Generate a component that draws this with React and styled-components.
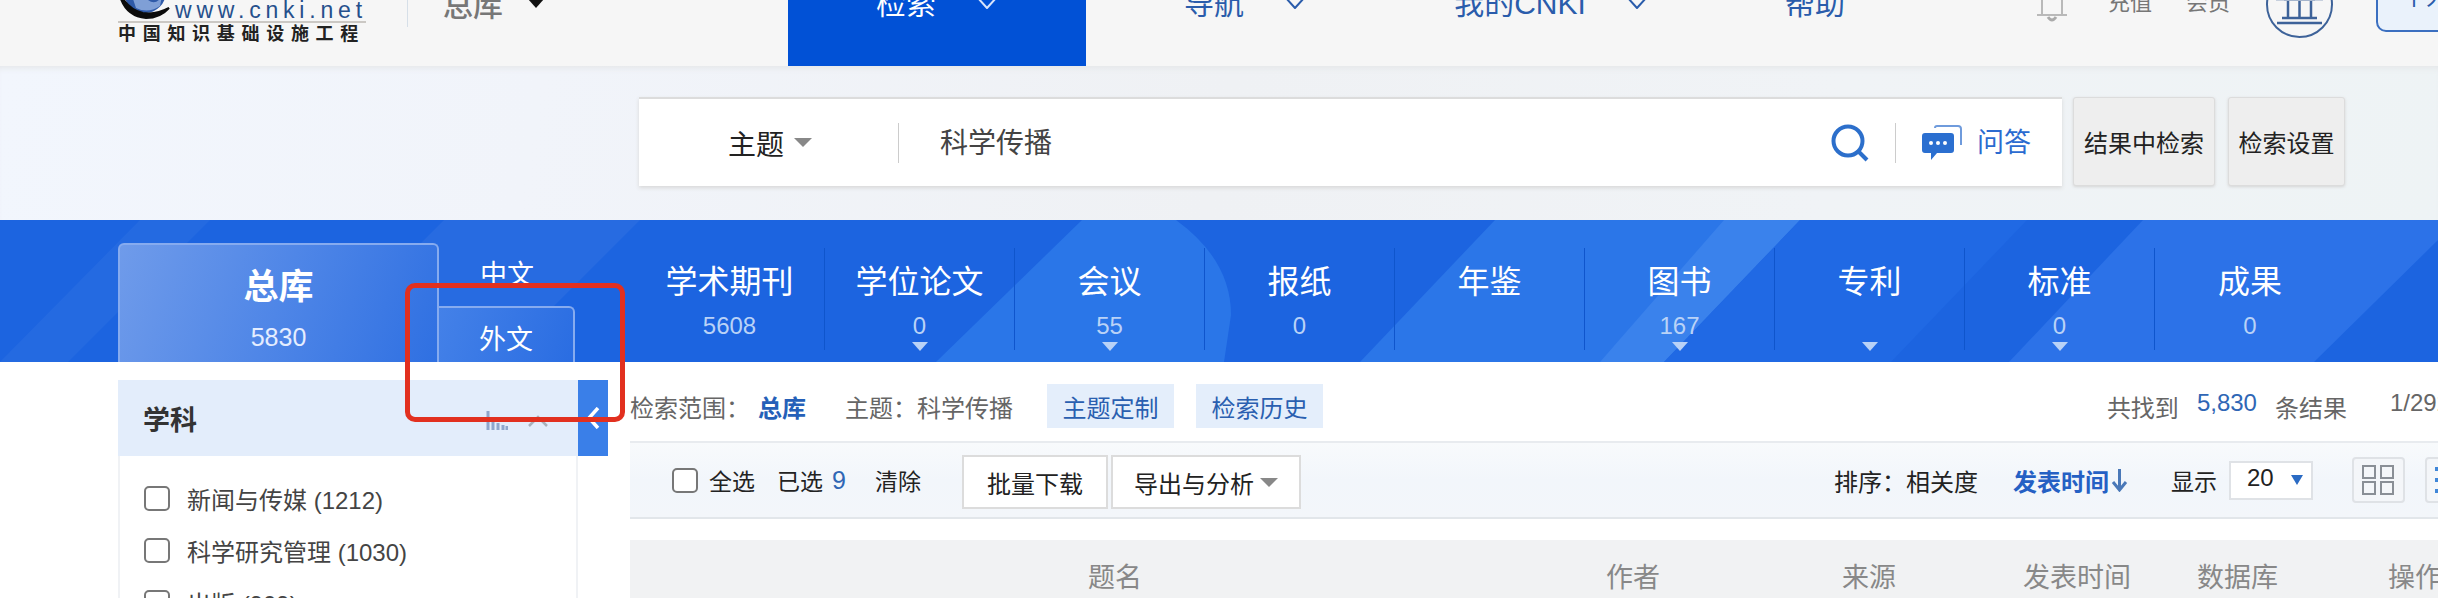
import React from 'react';
import styled, { createGlobalStyle } from 'styled-components';

const FONT = '"Liberation Sans", "Noto Sans CJK SC", sans-serif';

const GlobalStyle = createGlobalStyle`
  html, body {
    margin: 0;
    padding: 0;
    background: #fff;
    overflow: hidden;
  }
  * { box-sizing: border-box; }
`;

const Page = styled.div`
  position: relative;
  width: 2438px;
  height: 598px;
  overflow: hidden;
  font-family: ${FONT};
  color: #333;
`;

// the screenshot starts 34px into the header
const Header = styled.header`
  display: flex;
  align-items: flex-start;
  height: 100px;
  margin-top: -34px;
  padding-left: 118px;
  background: #f6f6f6;
`;

const Logo = styled.div`
  flex: none;
  width: 248px;
  margin-right: 41px;
`;

const LogoTop = styled.div`
  display: flex;
  height: 57px;
  overflow: hidden;
  border-bottom: 2px solid #cbc8c4;
`;

const GlobeMark = styled.svg`
  flex: none;
`;

const LogoWords = styled.div`
  flex: none;
  display: flex;
  flex-direction: column;
  justify-content: flex-end;
  height: 55px;
`;

const LogoMark = styled.div`
  font-size: 44px;
  font-weight: 700;
  line-height: 38px;
  letter-spacing: 2px;
  color: #111;
  margin-top: -2px;
`;

const LogoUrl = styled.div`
  font-size: 23px;
  line-height: 22px;
  letter-spacing: 4.8px;
  color: #26508c;
  white-space: nowrap;
`;

const LogoCaption = styled.div`
  font-size: 18px;
  font-weight: 700;
  line-height: 22px;
  letter-spacing: 6.7px;
  color: #222;
  white-space: nowrap;
`;

const VRule = styled.div`
  flex: none;
  width: 1px;
  height: 61px;
  margin-right: 35px;
  background: #d6dfe8;
`;

const LibrarySwitch = styled.div`
  flex: none;
  display: flex;
  align-items: center;
  width: 345px;
  height: 74px;
  font-size: 30px;
  font-weight: 500;
  color: #777;
`;

const BlackCaret = styled.span`
  width: 0;
  height: 0;
  margin: 0 0 0 25px;
  border-left: 8px solid transparent;
  border-right: 8px solid transparent;
  border-top: 9px solid #111;
`;

const NavItem = styled.div`
  flex: none;
  display: flex;
  justify-content: center;
  gap: 40px;
  width: ${p => p.$width}px;
  height: 100px;
  padding-top: 12px;
  font-size: 30px;
  line-height: 52px;
  color: ${p => (p.$active ? '#fff' : '#2a5cab')};
  background: ${p => (p.$active ? '#0151d6' : 'transparent')};
  svg { margin-top: 18px; }
`;

const HeaderTools = styled.div`
  flex: none;
  display: flex;
  align-items: flex-start;
  margin-left: 103px;
`;

const Bell = styled.svg`
  flex: none;
  margin: 25px 39px 0 0;
`;

const MemberLink = styled.span`
  flex: none;
  margin: 22px ${p => p.$gap}px 0 0;
  font-size: 22px;
  line-height: 30px;
  color: #777;
`;

const InstitutionBadge = styled.div`
  flex: none;
  width: 67px;
  height: 67px;
  margin: 5px 43px 0 0;
  border: 2px solid #3d6299;
  border-radius: 50%;
  display: flex;
  align-items: center;
  justify-content: center;
`;

const LoginButton = styled.div`
  flex: none;
  width: 120px;
  height: 50px;
  margin-top: 16px;
  padding: 0 0 0 24px;
  border: 2px solid #3b6fc0;
  border-radius: 10px;
  background: #eaf2fb;
  font-size: 24px;
  line-height: 26px;
  color: #2a5cab;
`;

const SearchBand = styled.section`
  display: flex;
  height: 154px;
  padding: 31px 0 0 639px;
  background: linear-gradient(100deg, #f2f6fd 0%, #f1f4fa 22%, #eff1f4 50%, #f0f3f6 75%, #eef3f5 100%);
  box-shadow: inset 0 6px 6px -4px #e4e6e8;
`;

const SearchBox = styled.div`
  display: flex;
  align-items: center;
  width: 1423px;
  height: 89px;
  background: #fff;
  border-top: 2px solid #dcdcdc;
  box-shadow: 0 2px 4px #d8d8d8;
`;

const FieldSelect = styled.div`
  flex: none;
  display: flex;
  align-items: center;
  width: 260px;
  height: 40px;
  padding-left: 89px;
  border-right: 1px solid #ccc;
  font-size: 28px;
  color: #222;
`;

const GreyCaret = styled.span`
  width: 0;
  height: 0;
  margin-left: ${p => p.$gap || 10}px;
  border-left: 9px solid transparent;
  border-right: 9px solid transparent;
  border-top: 9px solid #888;
`;

const SearchText = styled.div`
  flex: 1;
  padding-left: 41px;
  margin-top: -4px;
  font-size: 28px;
  color: #444;
`;

const SearchRule = styled.div`
  flex: none;
  width: 1px;
  height: 40px;
  margin: 0 26px;
  background: #ccc;
`;

const AskText = styled.span`
  flex: none;
  margin: -4px 31px 0 15px;
  font-size: 27px;
  color: #2b6bd0;
`;

const GreyButton = styled.div`
  flex: none;
  display: flex;
  align-items: center;
  justify-content: center;
  width: ${p => p.$width}px;
  height: 89px;
  margin-left: ${p => p.$gap}px;
  background: #eeeeee;
  border: 1px solid #dcdcdc;
  border-radius: 3px;
  box-shadow: 0 1px 3px #d4d4d4;
  font-size: 24px;
  color: #222;
`;

const DbBand = styled.section`
  position: relative;
  display: flex;
  height: 142px;
  padding-left: 118px;
  background: #1c64e0;
`;

const BandArt = styled.svg`
  position: absolute;
  left: 0;
  top: 0;
`;

const MainTab = styled.div`
  position: relative;
  flex: none;
  width: 321px;
  height: 119px;
  margin-top: 23px;
  display: flex;
  flex-direction: column;
  align-items: center;
  border: 2px solid #86abef;
  border-bottom: 0;
  border-radius: 6px 6px 0 0;
  background: linear-gradient(110deg, #6f9bea 0%, #4f86e7 50%, #2f70e2 100%);
  color: #fff;
`;

const MainTabTitle = styled.div`
  font-size: 35px;
  font-weight: 700;
  line-height: 50px;
  margin-top: 17px;
`;

const MainTabCount = styled.div`
  font-size: 25px;
  line-height: 34px;
  margin-top: 8px;
  color: #e4edff;
`;

const SubTabs = styled.div`
  position: relative;
  flex: none;
  width: 136px;
  height: 119px;
  margin: 23px 60px 0 0;
  display: flex;
  flex-direction: column;
`;

const SubTab = styled.div`
  display: flex;
  justify-content: center;
  font-size: 27px;
  color: #fff;
  height: ${p => (p.$active ? 56 : 63)}px;
  line-height: ${p => (p.$active ? 64 : 65)}px;
  ${p => p.$active && `
    border: 2px solid #86abef;
    border-left: 0;
    border-bottom: 0;
    border-radius: 0 6px 0 0;
    background: linear-gradient(110deg, #4481e8, #2a6de2);
  `}
`;

const DbItem = styled.div`
  position: relative;
  flex: none;
  width: 190px;
  height: 102px;
  margin-top: 28px;
  display: flex;
  flex-direction: column;
  align-items: center;
  border-right: ${p => (p.$last ? '0' : '1px solid #0f55cc')};
`;

const DbTitle = styled.div`
  margin-top: 12px;
  font-size: 32px;
  line-height: 44px;
  color: #fff;
`;

const DbCount = styled.div`
  min-height: 34px;
  margin-top: 5px;
  font-size: 24px;
  line-height: 34px;
  color: #b9d2f7;
`;

const DbCaret = styled.span`
  width: 0;
  height: 0;
  margin-top: -1px;
  border-left: 8px solid transparent;
  border-right: 8px solid transparent;
  border-top: 9px solid #b9d2f7;
`;

const Content = styled.section`
  display: flex;
  align-items: flex-start;
  padding-left: 118px;
  width: 2480px;
`;

const Sidebar = styled.aside`
  flex: none;
  width: 460px;
  margin-top: 18px;
`;

const SideHead = styled.div`
  display: flex;
  align-items: center;
  height: 76px;
  padding: 0 30px 0 25px;
  background: #e3edfb;
  font-size: 27px;
  font-weight: 700;
  color: #333;
`;

const SideTitle = styled.span`
  flex: 1;
`;

const SideIcon = styled.svg`
  flex: none;
  margin-top: 6px;
`;

const SideBody = styled.div`
  height: 200px;
  padding-top: 16px;
  border: 2px solid #f0f2f5;
  border-top: 0;
`;

const SideItem = styled.div`
  display: flex;
  align-items: center;
  height: 52px;
  padding-left: 24px;
  font-size: 24px;
  color: #444;
`;

const CheckBox = styled.span`
  flex: none;
  display: block;
  width: 26px;
  height: 25px;
  margin-right: ${p => p.$gap}px;
  border: 2px solid #777;
  border-radius: 5px;
  background: #fff;
`;

const CollapseTab = styled.div`
  flex: none;
  display: flex;
  align-items: center;
  justify-content: center;
  width: 30px;
  height: 76px;
  margin-top: 18px;
  background: #3a7fe8;
`;

const Results = styled.div`
  flex: none;
  width: 1850px;
  margin: 22px 0 0 22px;
`;

const ScopeRow = styled.div`
  display: flex;
  align-items: center;
  height: 44px;
  padding-right: 30px;
  font-size: 24px;
  color: #666;
  white-space: nowrap;
`;

const ScopeLink = styled.b`
  margin: 0 39px 0 ${p => p.$gap}px;
  color: #2560b8;
  font-weight: 700;
`;

const TagButton = styled.span`
  display: flex;
  align-items: center;
  justify-content: center;
  width: 127px;
  height: 44px;
  margin-left: ${p => p.$gap}px;
  background: #e4eefb;
  color: #2a5fb0;
`;

const ResultStats = styled.div`
  display: flex;
  gap: 18px;
  margin-left: auto;
  font-size: 24px;
`;

const BlueNumber = styled.span`
  color: #2f66b5;
`;

const PageInfo = styled.span`
  margin-left: 25px;
`;

const Toolbar = styled.div`
  display: flex;
  align-items: center;
  height: 78px;
  margin-top: 13px;
  padding: 0 4px 0 42px;
  border-top: 2px solid #e8ebef;
  border-bottom: 2px solid #e2e6ea;
  background: linear-gradient(180deg, #f8fafc 0%, #f2f6fb 50%, #f3f6fa 100%);
  font-size: 23px;
  color: #222;
  white-space: nowrap;
`;

const ToolText = styled.span`
  flex: none;
  margin-left: ${p => p.$gap}px;
  color: ${p => p.$color || '#222'};
  font-size: ${p => p.$size || 23}px;
  font-weight: ${p => (p.$bold ? 700 : 400)};
`;

const ToolButton = styled.div`
  flex: none;
  display: flex;
  align-items: center;
  justify-content: center;
  width: ${p => p.$width}px;
  height: 54px;
  margin: 4px 0 0 ${p => p.$gap}px;
  background: #fff;
  border: 2px solid #dcdcdc;
  font-size: 24px;
`;

const PageSize = styled.div`
  flex: none;
  display: flex;
  align-items: center;
  justify-content: space-between;
  width: 84px;
  height: 39px;
  margin: 0 0 0 12px;
  padding: 0 8px 4px 16px;
  background: #fff;
  border: 2px solid #dfe2e6;
  font-size: 24px;
`;

const BlueCaret = styled.span`
  width: 0;
  height: 0;
  margin-top: 4px;
  border-left: 6px solid transparent;
  border-right: 6px solid transparent;
  border-top: 10px solid #2b6bc4;
`;

const ViewButton = styled.div`
  flex: none;
  display: flex;
  align-items: center;
  justify-content: center;
  width: 53px;
  height: 46px;
  margin: 0 0 0 ${p => p.$gap}px;
  border: 2px solid #dfe2e6;
  border-radius: 4px;
  background: #f4f6f9;
`;

const SortArrow = styled.svg`
  flex: none;
`;

const TableHead = styled.div`
  display: grid;
  grid-template-columns: 518px 236px 181px 174px 191px auto;
  align-items: center;
  height: 70px;
  margin-top: 21px;
  padding-left: 458px;
  background: #f1f2f3;
  font-size: 27px;
  color: #888;
  white-space: nowrap;
`;

const RedFrame = styled.div`
  position: absolute;
  left: 405px;
  top: 283px;
  width: 220px;
  height: 139px;
  border: 5px solid #e2301f;
  border-radius: 10px;
`;

const databases = [
  { name: '学术期刊', count: '5608' },
  { name: '学位论文', count: '0', caret: true },
  { name: '会议', count: '55', caret: true },
  { name: '报纸', count: '0' },
  { name: '年鉴' },
  { name: '图书', count: '167', caret: true },
  { name: '专利', caret: true },
  { name: '标准', count: '0', caret: true },
  { name: '成果', count: '0' },
];

const subjects = ['新闻与传媒 (1212)', '科学研究管理 (1030)', '出版 (909)'];

const Chevron = ({ color }) => (
  <svg width="22" height="14" viewBox="0 0 22 14">
    <path d="M1.5 1.5 L11 12 L20.5 1.5" fill="none" stroke={color} strokeWidth="2" strokeLinejoin="round" />
  </svg>
);

const Globe = () => (
  <GlobeMark width="57" height="55" viewBox="0 0 57 55">
    <circle cx="27" cy="26" r="21" fill="#2f5aa8" />
    <path d="M14 30 Q24 24 30 34 Q38 40 44 30 L42 40 Q30 48 18 42 Z" fill="#7f9fd6" />
    <path d="M1 26 Q6 50 28 52 Q42 52 51 42 Q38 49 25 47 Q10 44 1 26 Z" fill="#0c0c0c" stroke="#0c0c0c" strokeWidth="2" />
  </GlobeMark>
);

const BandShapes = () => (
  <BandArt width="2438" height="142" viewBox="0 0 2438 142">
    <polygon points="140,0 210,0 68,142 0,142" fill="#fff" opacity="0.04" />
    <polygon points="444,0 640,0 498,142 302,142" fill="#fff" opacity="0.05" />
    <path d="M1082 0 L1176 0 Q1231 40 1231 95 L1224 142 L936 142 Z" fill="#2a76e8" />
    <polygon points="1495,0 1800,0 1664,142 1360,142" fill="#2b76e8" />
    <polygon points="1724,0 1800,0 1664,142 1600,142" fill="#3a82ec" />
    <polygon points="1800,0 2027,0 1891,142 1664,142" fill="#2069e4" />
    <polygon points="2143,0 2438,0 2438,20 2314,142 2009,142" fill="#2c72e8" />
  </BandArt>
);

const App = () => (
  <Page>
    <GlobalStyle />
    <Header>
      <Logo>
        <LogoTop>
          <Globe />
          <LogoWords>
            <LogoMark>CNKI</LogoMark>
            <LogoUrl>www.cnki.net</LogoUrl>
          </LogoWords>
        </LogoTop>
        <LogoCaption>中国知识基础设施工程</LogoCaption>
      </Logo>
      <VRule />
      <LibrarySwitch>
        总库
        <BlackCaret />
      </LibrarySwitch>
      <NavItem $width={298} $active>
        检索
        <Chevron color="#d8e4fb" />
      </NavItem>
      <NavItem $width={318}>
        导航
        <Chevron color="#2a5cab" />
      </NavItem>
      <NavItem $width={294}>
        我的CNKI
        <Chevron color="#2a5cab" />
      </NavItem>
      <NavItem $width={234}>帮助</NavItem>
      <HeaderTools>
        <Bell width="34" height="34" viewBox="0 0 34 34">
          <path d="M7 24 V10 Q7 -4 17 -4 Q27 -4 27 10 V24 Z" fill="none" stroke="#b9b9b9" strokeWidth="2" />
          <path d="M2 24 H32" stroke="#b9b9b9" strokeWidth="2" />
          <path d="M13 26 Q17 32 21 26" fill="none" stroke="#aaa" strokeWidth="3" />
          <circle cx="28" cy="-1" r="4" fill="#e8954a" />
        </Bell>
        <MemberLink $gap={34}>充值</MemberLink>
        <MemberLink $gap={36}>会员</MemberLink>
        <InstitutionBadge>
          <svg width="47" height="44" viewBox="0 0 47 44">
            <path d="M3 16 L23.5 2 L44 16 Z" fill="none" stroke="#3d6299" strokeWidth="2.5" />
            <path d="M8 16 H39 M12 18 V34 M23.5 18 V34 M35 18 V34 M6 35 H41 M1 40 H46" stroke="#3d6299" strokeWidth="2.5" />
          </svg>
        </InstitutionBadge>
        <LoginButton>个人</LoginButton>
      </HeaderTools>
    </Header>

    <SearchBand>
      <SearchBox>
        <FieldSelect>
          主题
          <GreyCaret />
        </FieldSelect>
        <SearchText>科学传播</SearchText>
        <svg width="38" height="38" viewBox="0 0 38 38">
          <circle cx="17" cy="17" r="14.5" fill="none" stroke="#2c6fcb" strokeWidth="4" />
          <path d="M27 27 L36 36" stroke="#2c6fcb" strokeWidth="4" />
        </svg>
        <SearchRule />
        <svg width="40" height="36" viewBox="0 0 40 36">
          <path d="M13 3 Q13 1 15 1 H36 Q39 1 39 4 V20" fill="none" stroke="#6f9bdc" strokeWidth="2" />
          <path d="M3 8 H29 Q32 8 32 11 V25 Q32 28 29 28 H15 L9 35 V28 H3 Q0 28 0 25 V11 Q0 8 3 8 Z" fill="#2b6fd0" />
          <circle cx="9" cy="18" r="2" fill="#fff" />
          <circle cx="16" cy="18" r="2" fill="#fff" />
          <circle cx="23" cy="18" r="2" fill="#fff" />
        </svg>
        <AskText>问答</AskText>
      </SearchBox>
      <GreyButton $width={142} $gap={11}>结果中检索</GreyButton>
      <GreyButton $width={117} $gap={13}>检索设置</GreyButton>
    </SearchBand>

    <DbBand>
      <BandShapes />
      <MainTab>
        <MainTabTitle>总库</MainTabTitle>
        <MainTabCount>5830</MainTabCount>
      </MainTab>
      <SubTabs>
        <SubTab>中文</SubTab>
        <SubTab $active>外文</SubTab>
      </SubTabs>
      {databases.map((db, i) => (
        <DbItem key={db.name} $last={i === databases.length - 1}>
          <DbTitle>{db.name}</DbTitle>
          <DbCount>{db.count}</DbCount>
          {db.caret && <DbCaret />}
        </DbItem>
      ))}
    </DbBand>

    <Content>
      <Sidebar>
        <SideHead>
          <SideTitle>学科</SideTitle>
          <SideIcon width="22" height="20" viewBox="0 0 22 20">
            <path d="M2 0 V19 M7 6 V19 M12 12 V19 M17 14 V19 M21 15 V19" stroke="#8fa6cc" strokeWidth="3" />
          </SideIcon>
          <SideIcon width="40" height="12" viewBox="0 0 40 12">
            <path d="M21 11 L30 2 L39 11" fill="none" stroke="#a9b0ba" strokeWidth="2.5" />
          </SideIcon>
        </SideHead>
        <SideBody>
          {subjects.map(name => (
            <SideItem key={name}>
              <CheckBox $gap={17} />
              {name}
            </SideItem>
          ))}
        </SideBody>
      </Sidebar>
      <CollapseTab>
        <svg width="14" height="22" viewBox="0 0 14 22">
          <path d="M12 1 L3 11 L12 21" fill="none" stroke="#fff" strokeWidth="3.5" />
        </svg>
      </CollapseTab>

      <Results>
        <ScopeRow>
          检索范围：
          <ScopeLink $gap={8}>总库</ScopeLink>
          主题：科学传播
          <TagButton $gap={34}>主题定制</TagButton>
          <TagButton $gap={22}>检索历史</TagButton>
          <ResultStats>
            共找到
            <BlueNumber>5,830</BlueNumber>
            条结果
            <PageInfo>1/292</PageInfo>
          </ResultStats>
        </ScopeRow>

        <Toolbar>
          <CheckBox $gap={0} />
          <ToolText $gap={11}>全选</ToolText>
          <ToolText $gap={22}>已选</ToolText>
          <ToolText $gap={9} $color="#2f66b5" $size={25}>9</ToolText>
          <ToolText $gap={29}>清除</ToolText>
          <ToolButton $width={146} $gap={41}>批量下载</ToolButton>
          <ToolButton $width={190} $gap={3}>
            导出与分析
            <GreyCaret $gap={6} />
          </ToolButton>
          <ToolText $gap={533} $size={24}>排序：相关度</ToolText>
          <ToolText $gap={35} $size={24} $color="#2560c4" $bold>发表时间</ToolText>
          <SortArrow width="21" height="24" viewBox="0 0 21 24">
            <path d="M10.5 1 V20 M4 14 L10.5 22 L17 14" fill="none" stroke="#4a78b8" strokeWidth="3" />
          </SortArrow>
          <ToolText $gap={41}>显示</ToolText>
          <PageSize>
            20
            <BlueCaret />
          </PageSize>
          <ViewButton $gap={39}>
            <svg width="32" height="30" viewBox="0 0 32 30">
              <path d="M1 1 H13 V13 H1 Z M19 1 H31 V13 H19 Z M1 17 H13 V29 H1 Z M19 17 H31 V29 H19 Z" fill="none" stroke="#8a8f96" strokeWidth="2" />
            </svg>
          </ViewButton>
          <ViewButton $gap={20}>
            <svg width="36" height="30" viewBox="0 0 36 30">
              <path d="M2 2 H6 V6 H2 Z M2 13 H6 V17 H2 Z M2 24 H6 V28 H2 Z" fill="#3f86d8" />
              <path d="M11 4 H34 M11 15 H34 M11 26 H34" stroke="#8a8f96" strokeWidth="2" />
            </svg>
          </ViewButton>
        </Toolbar>

        <TableHead>
          <span>题名</span>
          <span>作者</span>
          <span>来源</span>
          <span>发表时间</span>
          <span>数据库</span>
          <span>操作</span>
        </TableHead>
      </Results>
    </Content>

    <RedFrame />
  </Page>
);

export default App;
